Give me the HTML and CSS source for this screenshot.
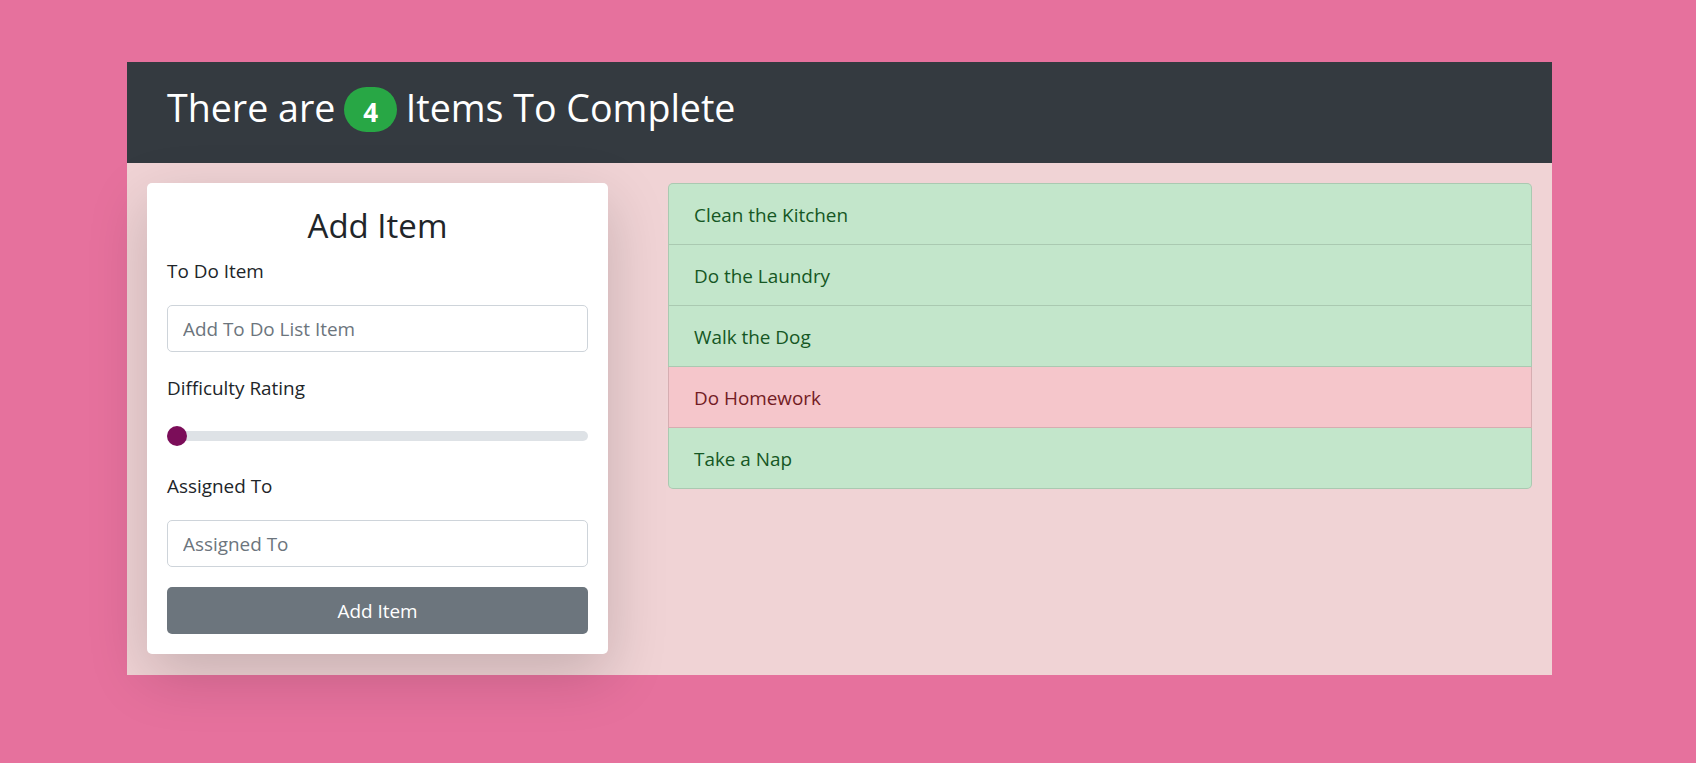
FILE: index.html
```html
<!DOCTYPE html>
<html lang="en">
<head>
<meta charset="utf-8">
<title>To Do List</title>
<link rel="stylesheet" href="styles.css">
</head>
<body>
  <div class="app">
    <header class="app-header">
      <h1 class="app-title">There are <span class="badge">4</span> Items To Complete</h1>
    </header>
    <main class="app-body">
      <form class="add-card">
        <h3 class="add-title">Add Item</h3>
        <label class="field-label" for="todo">To Do Item</label>
        <input class="field-input" id="todo" type="text" placeholder="Add To Do List Item">
        <label class="field-label" for="rating">Difficulty Rating</label>
        <input class="field-range" id="rating" type="range" min="0" max="5" value="0">
        <label class="field-label" for="assigned">Assigned To</label>
        <input class="field-input" id="assigned" type="text" placeholder="Assigned To">
        <button class="add-button" type="button">Add Item</button>
      </form>
      <ul class="todo-list">
        <li class="todo-item todo-item--done">Clean the Kitchen</li>
        <li class="todo-item todo-item--done">Do the Laundry</li>
        <li class="todo-item todo-item--done">Walk the Dog</li>
        <li class="todo-item todo-item--todo">Do Homework</li>
        <li class="todo-item todo-item--done">Take a Nap</li>
      </ul>
    </main>
  </div>
</body>
</html>
```

FILE: styles.css
```css
* {
  box-sizing: border-box;
}

html, body {
  margin: 0;
  padding: 0;
}

body {
  background: #e6719d;
  font-family: "Open Sans", "Noto Sans", "Liberation Sans", sans-serif;
  color: #212529;
  min-height: 763px;
}

.app {
  margin: 62px 0 0 127px;
  width: 1425px;
}

.app-header {
  background: #343a40;
  height: 101px;
  padding: 22px 40px 0;
}

.app-title {
  margin: 0;
  color: #ffffff;
  font-size: 37.6px;
  font-weight: 400;
  line-height: 48px;
  letter-spacing: 0;
}

.badge {
  display: inline-block;
  background: #28a745;
  color: #ffffff;
  font-size: 26px;
  font-weight: 700;
  line-height: 1;
  padding: 12px 19px 7px;
  margin: 0 -1px;
  border-radius: 30px;
  vertical-align: baseline;
}

.app-body {
  background: #f0d3d5;
  display: flex;
  align-items: flex-start;
  gap: 60px;
  padding: 20px 20px 21px;
}

.add-card {
  flex: 0 0 461px;
  background: #ffffff;
  border-radius: 5px;
  padding: 20px;
  box-shadow: 0 20px 60px rgba(0, 0, 0, 0.175);
  display: flex;
  flex-direction: column;
}

.add-title {
  margin: 2px 0 8px;
  text-align: center;
  font-size: 33px;
  font-weight: 400;
  line-height: 42px;
  color: #212529;
}

.field-label {
  display: block;
  font-size: 18.9px;
  line-height: 30px;
  padding-top: 1px;
  margin-bottom: 19px;
  color: #212529;
}

.field-input {
  display: block;
  width: 100%;
  height: 47px;
  margin: 0 0 20px;
  padding: 1px 15px 0;
  border: 1px solid #ced4da;
  border-radius: 5px;
  background: #ffffff;
  font-family: inherit;
  font-size: 18.9px;
  color: #495057;
}

.field-input::placeholder {
  color: #6c757d;
  opacity: 1;
}

.field-range {
  -webkit-appearance: none;
  appearance: none;
  display: block;
  width: 100%;
  height: 28px;
  margin: 0 0 20px;
  padding: 0;
  background: transparent;
}

.field-range::-webkit-slider-runnable-track {
  height: 10px;
  border-radius: 5px;
  background: #dee2e6;
}

.field-range::-webkit-slider-thumb {
  -webkit-appearance: none;
  appearance: none;
  width: 20px;
  height: 20px;
  margin-top: -5px;
  border: 0;
  border-radius: 50%;
  background: #7b0d59;
}

.add-button {
  display: block;
  width: 100%;
  height: 47px;
  border: 0;
  border-radius: 5px;
  padding: 1px 0 0;
  background: #6c757d;
  color: #ffffff;
  font-family: inherit;
  font-size: 18.9px;
}

.todo-list {
  flex: 1 1 auto;
  margin: 0;
  padding: 0;
  list-style: none;
}

.todo-item {
  padding: 16px 25px 14px;
  font-size: 18.9px;
  line-height: 30px;
  border: 1px solid rgba(0, 0, 0, 0.125);
}

.todo-item + .todo-item {
  border-top-width: 0;
}

.todo-item:first-child {
  border-top-left-radius: 5px;
  border-top-right-radius: 5px;
}

.todo-item:last-child {
  border-bottom-left-radius: 5px;
  border-bottom-right-radius: 5px;
}

.todo-item--done {
  background: #c3e6cb;
  color: #155724;
}

.todo-item--todo {
  background: #f5c6cb;
  color: #721c24;
}
```
